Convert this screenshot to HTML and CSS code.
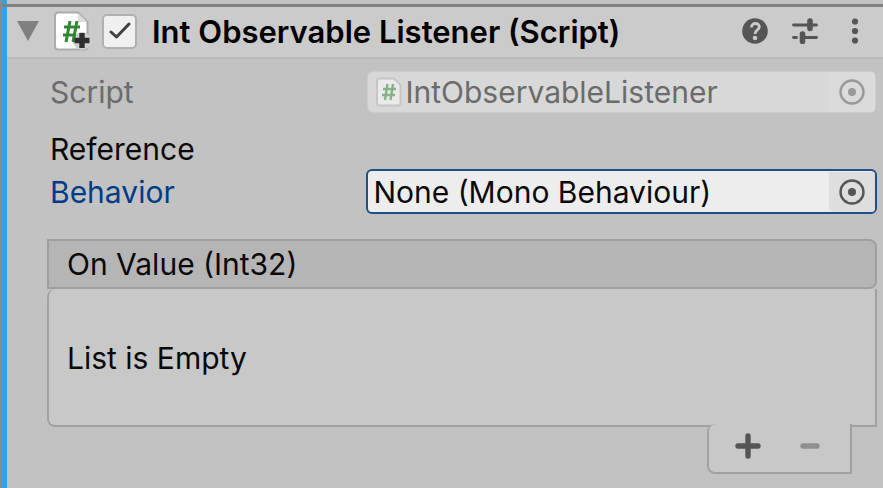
FILE: index.html
```html
<!DOCTYPE html>
<html lang="en">
<head>
<meta charset="utf-8">
<title>Inspector</title>
<link rel="stylesheet" href="styles.css">
</head>
<body>
<main class="inspector">
  <header class="header">
    <button class="icon-button foldout" aria-label="Collapse component">
      <svg width="22" height="20" viewBox="0 0 22 20"><path d="M0 0H22L11 20Z" fill="#808080"/></svg>
    </button>
    <svg class="script-icon" width="38" height="40" viewBox="0 0 38 40" aria-hidden="true">
      <path d="M4 1.500H24L33.500 11V35Q33.500 38.500 30 38.500H4Q1 38.500 1 35V5Q1 1.500 4 1.500Z" fill="#fff" stroke="#acacac" stroke-width="2"/>
      <path d="M24 2V11H33" fill="#ddd"/>
      <circle cx="28" cy="30" r="9" fill="#d0d0d0"/>
      <path d="M16 10L12 31M23 10L19 31M10 16H26M9 24H22" fill="none" stroke="#328532" stroke-width="3"/>
      <path d="M28 22V37M20.500 29.500H35.500" stroke="#303030" stroke-width="5.400"/>
    </svg>
    <label class="toggle">
      <input type="checkbox" checked aria-label="Component enabled">
      <svg width="22" height="18" viewBox="0 0 22 18" aria-hidden="true"><path d="M2 10L7.500 15L20 2" fill="none" stroke="#404040" stroke-width="3" stroke-linecap="round" stroke-linejoin="round"/></svg>
    </label>
    <h1 class="title">Int Observable Listener (Script)</h1>
    <div class="tools">
      <button class="icon-button" aria-label="Help">
        <svg width="26" height="26" viewBox="0 0 26 26"><circle cx="13" cy="13" r="12.800" fill="#555"/><path d="M9.500 9.500C9.500 4 17.500 4.500 17.300 9C17.200 12 13 12 13 16" fill="none" stroke="#cbcbcb" stroke-width="2.800"/><circle cx="13" cy="20" r="2.300" fill="#cbcbcb"/></svg>
      </button>
      <button class="icon-button" aria-label="Presets">
        <svg width="26" height="26" viewBox="0 0 26 26"><path d="M1.500 7H24.500M1.500 19.500H4.500M10 19.500H24.500" stroke="#555" stroke-width="2.800" stroke-linecap="round"/><path d="M18 3V10.500M10.500 16V23.500" stroke="#555" stroke-width="5.600" stroke-linecap="round"/></svg>
      </button>
      <button class="icon-button" aria-label="More options">
        <svg width="26" height="26" viewBox="0 0 26 26"><g fill="#555"><circle cx="13" cy="3.500" r="3.100"/><circle cx="13" cy="13" r="3.100"/><circle cx="13" cy="22.500" r="3.100"/></g></svg>
      </button>
    </div>
  </header>

  <section class="body">
    <div class="row disabled">
      <label class="name" for="script">Script</label>
      <div class="field">
        <svg width="26" height="30" viewBox="0 0 26 30" aria-hidden="true"><path d="M3 1.500H18L24.500 8V26Q24.500 28.500 22 28.500H3.500Q1 28.500 1 26V4Q1 1.500 3 1.500Z" fill="#eaeaea" stroke="#c6c6c6" stroke-width="2"/><path d="M11.500 7L9 23M17 7L14.500 23M7 12H20M6 18H19" stroke="#86b086" stroke-width="2.400"/></svg>
        <input id="script" type="text" value="IntObservableListener" disabled>
        <button class="picker" aria-label="Select script" disabled>
          <svg width="26" height="26" viewBox="0 0 26 26"><circle cx="13" cy="13" r="11.500" fill="none" stroke="#999" stroke-width="2.400"/><circle cx="13" cy="13" r="4" fill="#999"/></svg>
        </button>
      </div>
    </div>
    <div class="row tall">
      <label class="name wrapped" for="behavior"><span>Reference</span> <span class="active">Behavior</span></label>
      <div class="field focused">
        <input id="behavior" type="text" value="None (Mono Behaviour)" readonly>
        <button class="picker" aria-label="Select behavior">
          <svg width="26" height="26" viewBox="0 0 26 26"><circle cx="13" cy="13" r="11.500" fill="none" stroke="#555" stroke-width="2.400"/><circle cx="13" cy="13" r="4" fill="#555"/></svg>
        </button>
      </div>
    </div>

    <section class="event">
      <h2 class="event-title">On Value (Int32)</h2>
      <div class="event-list">List is Empty</div>
      <footer class="event-footer">
        <button class="icon-button" aria-label="Add">
          <svg width="26" height="26" viewBox="0 0 26 26"><path d="M13 3V23M3 13H23" stroke="#555" stroke-width="5.400" stroke-linecap="round"/></svg>
        </button>
        <button class="icon-button" aria-label="Remove" disabled>
          <svg width="26" height="26" viewBox="0 0 26 26"><path d="M6 13H20" stroke="#909090" stroke-width="5.400" stroke-linecap="round"/></svg>
        </button>
      </footer>
    </section>
  </section>
</main>
</body>
</html>
```
FILE: styles.css
```css
* {
  box-sizing: border-box;
}

body {
  margin: 0;
  background: #c2c2c2;
  color: #090909;
  font: 30px/43px Inter, "Liberation Sans", sans-serif;
}

button,
input {
  margin: 0;
  padding: 0;
  border: 0;
  background: none;
  color: inherit;
  font: inherit;
}

svg {
  display: block;
  flex: none;
}

.inspector {
  min-height: 100vh;
  padding-top: 4px;
  background:
    linear-gradient(#808080, #808080) 2px 4px / 100% 3px no-repeat,
    linear-gradient(to right, #8a8a8a 2px, #33a3e3 2px, #33a3e3 7px, #c2c2c2 7px);
}

.header {
  display: flex;
  align-items: center;
  height: 55px;
  margin-left: 7px;
  padding: 0 15px 2px 10px;
  border-top: 3px solid #808080;
  border-bottom: 2px solid #bababa;
  background: #cbcbcb;
}

.icon-button {
  display: flex;
  align-items: center;
  justify-content: center;
}

.script-icon {
  margin-left: 15px;
}

.toggle {
  position: relative;
  display: flex;
  margin-left: 10px;
}

.toggle input {
  width: 35px;
  height: 35px;
  border: 2px solid #b0b0b0;
  border-radius: 5px;
  background: #f0f0f0;
  appearance: none;
}

.toggle svg {
  position: absolute;
  inset: 0;
  margin: auto;
  pointer-events: none;
}

.toggle input:not(:checked) + svg {
  display: none;
}

.title {
  flex: 1;
  margin: 0 0 0 15px;
  color: #000;
  font-size: 31px;
  font-weight: 600;
  white-space: nowrap;
}

.tools {
  display: flex;
  gap: 24px;
}

.body {
  padding: 12px 6px 14px 47px;
}

.row {
  display: grid;
  grid-template-columns: 38fr 61fr;
  align-items: end;
  padding-left: 3px;
}

.tall {
  margin-top: 14px;
}

.name {
  align-self: center;
}

.wrapped span {
  display: block;
}

.active {
  color: #003c88;
}

.disabled {
  color: #6b6b6b;
}

.field {
  display: flex;
  align-items: center;
  align-self: start;
  min-width: 0;
  height: 42px;
  margin-right: 1px;
  padding-left: 8px;
  border: 1px solid #cbcbcb;
  border-radius: 6px;
  background: #d8d8d8;
}

.field input {
  flex: 1;
  min-width: 0;
  height: 40px;
  margin-left: 3px;
  outline: 0;
}

.picker {
  display: flex;
  align-items: center;
  justify-content: center;
  width: 46px;
  height: 40px;
  border-radius: 0 4px 4px 6px;
  background: #dbdbdb;
}

.focused {
  align-self: end;
  height: 45px;
  margin-right: 0;
  margin-left: -1px;
  padding-left: 2px;
  border: 2px solid #1d5087;
  background: #ededed;
}

.focused input {
  padding-top: 2px;
}

.focused .picker {
  background: #dedede;
}

.event {
  margin-top: 25px;
}

.event-title {
  height: 50px;
  margin: 0;
  padding: 2px 18px;
  border: 2px solid #9f9f9f;
  border-radius: 0 8px 8px 0;
  background: #b5b5b5;
  font-size: 30px;
  font-weight: 400;
}

.event-list {
  display: flex;
  align-items: center;
  height: 138px;
  padding: 2px 18px 0;
  border: 2px solid #a1a1a1;
  border-top: 0;
  border-radius: 8px 0 0 8px;
  background: #c8c8c8;
}

.event-footer {
  position: relative;
  display: flex;
  align-items: center;
  justify-content: center;
  gap: 36px;
  width: 145px;
  height: 50px;
  margin: -3px 25px 0 auto;
  padding: 0 2px 4px 0;
  border: 2px solid #a1a1a1;
  border-top: 0;
  border-radius: 8px 0 0 8px;
  background: #c8c8c8;
}
```
